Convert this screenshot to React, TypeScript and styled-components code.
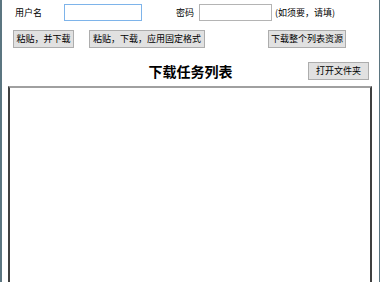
import styled, { createGlobalStyle } from "styled-components";

const GlobalStyle = createGlobalStyle`
  html, body {
    margin: 0;
    padding: 0;
    background: #fff;
  }
  body {
    font-family: "Noto Sans CJK SC", "Noto Sans", sans-serif;
    color: #000;
  }
`;

const App = () => {
  return (
    <>
      <GlobalStyle />
      <Page>
        <LoginRow>
          <FieldLabel $width={49}>用户名</FieldLabel>
          <TextInput $width={78} $focused />
          <FieldLabel $width={23} style={{ marginLeft: 34 }}>
            密码
          </FieldLabel>
          <TextInput $width={73} type="password" />
          <Hint>(如须要，请填)</Hint>
        </LoginRow>

        <ActionRow>
          <Button $width={61}>粘贴，并下载</Button>
          <Button $width={116} style={{ marginLeft: 15 }}>
            粘贴，下载，应用固定格式
          </Button>
          <Button $width={78} style={{ marginLeft: 63 }}>
            下载整个列表资源
          </Button>
        </ActionRow>

        <TitleRow>
          <span />
          <Title>下载任务列表</Title>
          <FolderButton>打开文件夹</FolderButton>
        </TitleRow>

        <TaskList />
      </Page>
    </>
  );
};

export default App;

const Page = styled.div`
  height: 282px;
  box-sizing: border-box;
  border-left: 2px solid #5b7580;
  border-right: 1px solid #5b7580;
  overflow: hidden;
  display: flex;
  flex-direction: column;
`;

const LoginRow = styled.div`
  display: flex;
  align-items: center;
  padding: 4px 0 0 13px;
  height: 17px;
`;

const FieldLabel = styled.span<{ $width: number }>`
  width: ${(props) => props.$width}px;
  font-size: 9px;
  line-height: 17px;
  flex-shrink: 0;
`;

const TextInput = styled.input<{ $width: number; $focused?: boolean }>`
  width: ${(props) => props.$width}px;
  height: 17px;
  box-sizing: border-box;
  margin: 0;
  padding: 0 2px;
  border: 1px solid ${(props) => (props.$focused ? "#7eb4ea" : "#b4b4b4")};
  background: #fff;
  outline: none;
  flex-shrink: 0;
`;

const Hint = styled.span`
  margin-left: 3px;
  font-size: 9px;
  line-height: 17px;
  white-space: nowrap;
`;

const ActionRow = styled.div`
  display: flex;
  align-items: center;
  padding: 9px 0 0 11px;
`;

const Button = styled.button<{ $width: number }>`
  width: ${(props) => props.$width}px;
  height: 18px;
  box-sizing: border-box;
  margin: 0;
  padding: 0;
  border: 1px solid #adadad;
  background: #e1e1e1;
  font-family: "Noto Sans CJK SC", "Noto Sans", sans-serif;
  font-size: 9px;
  line-height: 16px;
  color: #000;
  white-space: nowrap;
  flex-shrink: 0;
`;

const TitleRow = styled.div`
  display: grid;
  grid-template-columns: 1fr auto 1fr;
  align-items: center;
  margin-top: 14px;
  height: 17px;
`;

const Title = styled.h1`
  margin: 0;
  font-size: 14px;
  font-weight: bold;
  line-height: 17px;
`;

const FolderButton = styled(Button).attrs({ $width: 61 })`
  justify-self: end;
  margin-right: 10px;
`;

const TaskList = styled.div`
  margin: 7px 0 0 6px;
  width: 364px;
  flex: 1;
  box-sizing: border-box;
  border-top: 2px solid #a0a0a0;
  border-left: 2px solid #404040;
  border-right: 2px solid #404040;
  background: #fff;
`;
